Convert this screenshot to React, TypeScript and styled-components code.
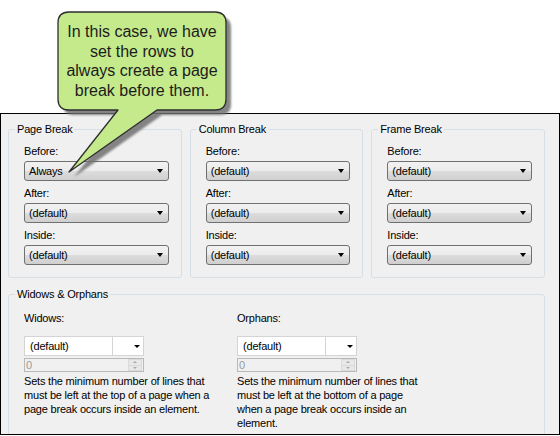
import React from "react";
import styled, { createGlobalStyle } from "styled-components";

const GlobalStyle = createGlobalStyle`
  html, body {
    margin: 0;
    padding: 0;
    background: #ffffff;
  }
  body {
    font-family: "Liberation Sans", Arial, sans-serif;
    font-size: 11px;
    letter-spacing: -0.2px;
    color: #000;
  }
`;

const breakGroups = [
  { title: "Page Break", values: ["Always", "(default)", "(default)"] },
  { title: "Column Break", values: ["(default)", "(default)", "(default)"] },
  { title: "Frame Break", values: ["(default)", "(default)", "(default)"] },
];

const breakFields = ["Before:", "After:", "Inside:"];

const orphanColumns = [
  {
    label: "Widows:",
    text: "Sets the minimum number of lines that must be left at the top of a page when a page break occurs inside an element.",
  },
  {
    label: "Orphans:",
    text: "Sets the minimum number of lines that must be left at the bottom of a page when a page break occurs inside an element.",
  },
];

const Combo = ({ value }: { value: string }) => (
  <StyledCombo>
    <StyledComboText>{value}</StyledComboText>
    <StyledArrow />
  </StyledCombo>
);

const FlatCombo = ({ value }: { value: string }) => (
  <StyledFlatCombo>
    <StyledFlatText>{value}</StyledFlatText>
    <StyledFlatButton>
      <StyledArrow $small />
    </StyledFlatButton>
  </StyledFlatCombo>
);

const Spinner = ({ value }: { value: string }) => (
  <StyledSpinner>
    <StyledSpinValue>{value}</StyledSpinValue>
    <StyledSpinButtons>
      <StyledSpinHalf $dir="up" />
      <StyledSpinHalf $dir="down" />
    </StyledSpinButtons>
  </StyledSpinner>
);

const bubblePath =
  "M 69 12 H 215 Q 226 12 226 23 V 99 Q 226 110 215 110 H 157 L 69 172 L 118 110 H 69 Q 58 110 58 99 V 23 Q 58 12 69 12 Z";

const Callout = () => (
  <StyledCalloutLayer>
    <svg width="560" height="200" viewBox="0 0 560 200">
      <defs>
        <filter id="soft" x="-10%" y="-10%" width="120%" height="120%">
          <feGaussianBlur stdDeviation="1" />
        </filter>
      </defs>
      <path
        d={bubblePath}
        transform="translate(5 5)"
        fill="#6f6f6f"
        opacity="0.85"
        filter="url(#soft)"
      />
      <path
        d={bubblePath}
        fill="#c4ea8b"
        stroke="#2e2e2e"
        strokeWidth="1.3"
        strokeLinejoin="round"
      />
    </svg>
    <StyledCalloutText>
      In this case, we have
      <br />
      set the rows to
      <br />
      always create a page
      <br />
      break before them.
    </StyledCalloutText>
  </StyledCalloutLayer>
);

export default function App() {
  return (
    <>
      <GlobalStyle />
      <StyledPage>
        <StyledPanel>
          <StyledBreakRow>
            {breakGroups.map((group) => (
              <StyledGroup key={group.title}>
                <StyledLegend>{group.title}</StyledLegend>
                <StyledGroupBody>
                  {breakFields.map((field, i) => (
                    <StyledField key={field}>
                      <StyledFieldLabel>{field}</StyledFieldLabel>
                      <Combo value={group.values[i]} />
                    </StyledField>
                  ))}
                </StyledGroupBody>
              </StyledGroup>
            ))}
          </StyledBreakRow>
          <StyledWideGroup>
            <StyledLegend>Widows &amp; Orphans</StyledLegend>
            <StyledWideBody>
              {orphanColumns.map((col) => (
                <StyledOrphanColumn key={col.label}>
                  <StyledWideLabel>{col.label}</StyledWideLabel>
                  <FlatCombo value="(default)" />
                  <Spinner value="0" />
                  <StyledDescription>{col.text}</StyledDescription>
                </StyledOrphanColumn>
              ))}
            </StyledWideBody>
          </StyledWideGroup>
        </StyledPanel>
        <Callout />
      </StyledPage>
    </>
  );
}

const StyledPage = styled.div`
  position: relative;
  width: 560px;
  height: 436px;
  overflow: hidden;
`;

const StyledPanel = styled.section`
  box-sizing: border-box;
  margin-top: 113px;
  width: 560px;
  height: 322px;
  border: 1px solid #000;
  background: #f0f0f0;
  padding: 8px 14px 0 7px;
  overflow: hidden;
`;

const StyledBreakRow = styled.div`
  display: flex;
  gap: 8px;
`;

const StyledGroup = styled.fieldset`
  flex: 1;
  min-width: 0;
  margin: 0;
  padding: 0;
  border: 1px solid #d5dfe5;
  border-radius: 3px;
`;

const StyledWideGroup = styled(StyledGroup)`
  margin-top: 9px;
`;

const StyledLegend = styled.legend`
  margin-left: 6px;
  padding: 0 2px;
  font-size: 11px;
  line-height: 14px;
  color: #000;
`;

const StyledGroupBody = styled.div`
  display: flex;
  flex-direction: column;
  gap: 5px;
  padding: 8px 12px 12px 15px;
`;

const StyledField = styled.div`
  display: flex;
  flex-direction: column;
`;

const StyledFieldLabel = styled.div`
  line-height: 14px;
  margin-bottom: 3px;
`;

const StyledCombo = styled.div`
  box-sizing: border-box;
  display: flex;
  align-items: center;
  justify-content: space-between;
  height: 20px;
  padding: 0 5px 0 4px;
  border: 1px solid #707070;
  border-radius: 3px;
  background: linear-gradient(
    #f2f2f2 0%,
    #ebebeb 50%,
    #dddddd 50%,
    #cfcfcf 100%
  );
`;

const StyledComboText = styled.span`
  line-height: 14px;
`;

const StyledArrow = styled.span<{ $small?: boolean }>`
  width: 0;
  height: 0;
  border-left: ${({ $small }) => ($small ? "3px" : "3.5px")} solid transparent;
  border-right: ${({ $small }) => ($small ? "3px" : "3.5px")} solid transparent;
  border-top: ${({ $small }) => ($small ? "3.5px" : "4px")} solid #000;
`;

const StyledWideBody = styled.div`
  display: grid;
  grid-template-columns: 188px 188px;
  column-gap: 25px;
  padding: 10px 12px 20px 15px;
`;

const StyledOrphanColumn = styled.div`
  display: flex;
  flex-direction: column;
`;

const StyledWideLabel = styled.div`
  line-height: 14px;
  margin-bottom: 11px;
`;

const StyledFlatCombo = styled.div`
  box-sizing: border-box;
  display: flex;
  width: 120px;
  height: 20px;
  border: 1px solid #d4d4d4;
  background: #fff;
`;

const StyledFlatText = styled.span`
  flex: 1;
  display: flex;
  align-items: center;
  padding-left: 5px;
`;

const StyledFlatButton = styled.span`
  display: flex;
  align-items: center;
  justify-content: flex-end;
  width: 31px;
  padding-right: 3px;
  border-left: 1px solid #d4d4d4;
  box-sizing: border-box;
`;

const StyledSpinner = styled.div`
  box-sizing: border-box;
  display: flex;
  align-items: stretch;
  width: 120px;
  height: 14px;
  margin-top: 2px;
  border: 1px solid #b9b9b9;
  background: #f0f0f0;
`;

const StyledSpinValue = styled.span`
  flex: 1;
  padding-left: 1px;
  line-height: 12px;
  color: #9a9a9a;
`;

const StyledSpinButtons = styled.span`
  display: flex;
  flex-direction: column;
  width: 14px;
  margin-right: 1px;
`;

const StyledSpinHalf = styled.span<{ $dir: "up" | "down" }>`
  flex: 1;
  display: flex;
  align-items: center;
  justify-content: center;
  border: 1px solid #dadada;
  border-top-width: ${({ $dir }) => ($dir === "up" ? "1px" : "0")};
  background: #e8e8e8;
  &::after {
    content: "";
    width: 0;
    height: 0;
    border-left: 2.5px solid transparent;
    border-right: 2.5px solid transparent;
    ${({ $dir }) =>
      $dir === "up"
        ? "border-bottom: 2px solid #a8a8a8;"
        : "border-top: 2px solid #a8a8a8;"}
  }
`;

const StyledDescription = styled.p`
  margin: 2px 0 0;
  line-height: 14px;
`;

const StyledCalloutLayer = styled.div`
  position: absolute;
  left: 0;
  top: 0;
  width: 560px;
  height: 200px;
  pointer-events: none;
  svg {
    display: block;
  }
`;

const StyledCalloutText = styled.div`
  position: absolute;
  left: 58px;
  top: 12px;
  width: 168px;
  height: 98px;
  display: flex;
  align-items: center;
  justify-content: center;
  text-align: center;
  font-family: "Liberation Sans", Arial, sans-serif;
  font-size: 16px;
  letter-spacing: 0;
  line-height: 19.5px;
  color: #1c1c1c;
`;
